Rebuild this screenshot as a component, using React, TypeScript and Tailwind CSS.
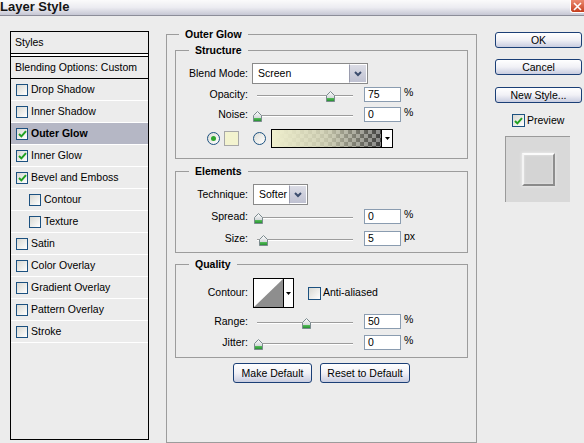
import React from 'react';

interface StyleItem {
  label: string;
  checked?: boolean;
  active?: boolean;
  indent?: boolean;
}

const styleItems: StyleItem[] = [
  { label: 'Drop Shadow' },
  { label: 'Inner Shadow' },
  { label: 'Outer Glow', checked: true, active: true },
  { label: 'Inner Glow', checked: true },
  { label: 'Bevel and Emboss', checked: true },
  { label: 'Contour', indent: true },
  { label: 'Texture', indent: true },
  { label: 'Satin' },
  { label: 'Color Overlay' },
  { label: 'Gradient Overlay' },
  { label: 'Pattern Overlay' },
  { label: 'Stroke' },
];

const CheckBox: React.FC<{ checked?: boolean; size?: string }> = ({ checked, size = 'w-[13px] h-[13px]' }) => (
  <span className={`${size} shrink-0 border border-[#1c5180] bg-linear-to-br from-[#d8d8d2] to-white flex items-center justify-center`}>
    {checked && (
      <svg width="9" height="8" viewBox="0 0 9 8">
        <path d="M1 4 L3.4 6.4 L8 1.2" stroke="#21a121" strokeWidth="2" fill="none" />
      </svg>
    )}
  </span>
);

const Radio: React.FC<{ checked?: boolean }> = ({ checked }) => (
  <span className="w-[13px] h-[13px] shrink-0 rounded-full border border-[#1c5180] bg-linear-to-br from-[#dcdcd6] to-white flex items-center justify-center">
    {checked && <span className="w-[5px] h-[5px] rounded-full bg-[#2ea52e]" />}
  </span>
);

const Chevron = () => (
  <svg width="8" height="6" viewBox="0 0 8 6">
    <path d="M1 1 L4 4 L7 1" stroke="#3c4d6e" strokeWidth="2" fill="none" />
  </svg>
);

const Select: React.FC<{ value: string; width: string }> = ({ value, width }) => (
  <div className={`${width} ml-[4px] h-[21px] flex border border-[#8a8a8a] bg-white`}>
    <span className="flex-1 flex items-center pl-[5px]">{value}</span>
    <span className="w-[18px] bg-linear-to-b from-[#dcdde6] to-[#bfc1d1] border border-white border-l-[#9a9cae] flex items-center justify-center">
      <Chevron />
    </span>
  </div>
);

const Thumb: React.FC<{ pct: number }> = ({ pct }) => (
  <svg
    width="9"
    height="11"
    viewBox="0 0 9 11"
    className="absolute top-[4px]"
    style={{ left: `calc(${pct}% - 4px)` }}
  >
    <defs>
      <linearGradient id="thumbFill" x1="0" y1="0" x2="0" y2="1">
        <stop offset="0" stopColor="#ffffff" />
        <stop offset="0.6" stopColor="#d6dadc" />
        <stop offset="0.62" stopColor="#5cc35f" />
        <stop offset="1" stopColor="#1f8a2b" />
      </linearGradient>
    </defs>
    <path d="M4.5 0.5 L8.5 4.5 L8.5 10.5 L0.5 10.5 L0.5 4.5 Z" fill="url(#thumbFill)" stroke="#7b8a8e" />
  </svg>
);

const SliderRow: React.FC<{ label: string; value: string; unit: string; pct: number; className?: string }> = ({
  label,
  value,
  unit,
  pct,
  className = '',
}) => (
  <div className={`flex items-center h-[15px] ${className}`}>
    <span className="w-[72px] text-right">{label}</span>
    <div className="relative w-[96px] h-[15px] ml-[9px]">
      <div className="absolute left-0 right-0 top-[8px] h-[2px] border-t border-[#9c9c9c] border-b border-b-white" />
      <Thumb pct={pct} />
    </div>
    <div className="w-[37px] h-[15px] ml-[11px] border border-[#8a9cb0] bg-white flex items-center pl-[3px]">{value}</div>
    <span className="ml-[3px] self-start leading-[10px]">{unit}</span>
  </div>
);

const Group: React.FC<{ title: string; className?: string; children: React.ReactNode }> = ({ title, className = '', children }) => (
  <fieldset className={`border border-[#9c9c9c] p-0 m-0 ${className}`}>
    <legend className="ml-[13px] px-[6px] font-bold leading-[12px]">{title}</legend>
    {children}
  </fieldset>
);

const XPButton: React.FC<{ className: string; children: React.ReactNode }> = ({ className, children }) => (
  <button className={`${className} rounded-[3px] border border-[#1b3f76] bg-linear-to-b from-white via-[#f1f1f6] to-[#c9cde0] flex items-center justify-center leading-none`}>
    {children}
  </button>
);

const TitleBar = () => (
  <div className="h-[16px] shrink-0 flex items-start justify-between overflow-hidden border-b border-[#8c8d99] bg-linear-to-b from-[#fbfbfb] via-[#ececf1] to-[#c6c7d4]">
    <span className="text-[13px] font-bold leading-[13px] text-[#151515]">Layer Style</span>
    <span className="w-[14px] h-[13px] rounded-bl-[3px] border-l border-b border-white bg-linear-to-b from-[#ec8a70] to-[#c43d1c] flex items-center justify-center">
      <svg width="9" height="9" viewBox="0 0 9 9">
        <path d="M1 1 L8 8 M8 1 L1 8" stroke="#fff" strokeWidth="1.6" />
      </svg>
    </span>
  </div>
);

const StylesPanel = () => (
  <div className="ml-[10px] mt-[15px] w-[139px] h-[409px] border border-black flex flex-col">
    <div className="h-[22px] shrink-0 flex items-center pl-[4px] border-b border-black">Styles</div>
    <div className="h-[2px] shrink-0 bg-white" />
    <div className="h-[23px] shrink-0 flex items-center pl-[4px] border-t border-b border-black">Blending Options: Custom</div>
    {styleItems.map((item) => (
      <div
        key={item.label}
        className={`h-[22px] shrink-0 flex items-center gap-[3px] border-b border-white ${
          item.indent ? 'pl-[18px]' : 'pl-[5px]'
        } ${item.active ? 'bg-[#b5b7c5] font-bold' : ''}`}
      >
        <CheckBox checked={item.checked} size="w-[12px] h-[12px]" />
        <span>{item.label}</span>
      </div>
    ))}
  </div>
);

const OuterGlowPanel = () => (
  <fieldset className="ml-[17px] mt-[12px] w-[311px] h-[415px] border border-[#9c9c9c] p-0 m-0">
    <legend className="ml-[12px] px-[6px] font-bold leading-[12px]">Outer Glow</legend>
    <div className="px-[8px] pt-[4px] flex flex-col">
      <Group title="Structure">
        <div className="pt-[7px] pb-[10px] flex flex-col">
          <div className="flex items-center h-[21px]">
            <span className="w-[72px] text-right">Blend Mode:</span>
            <Select value="Screen" width="w-[116px]" />
          </div>
          <SliderRow label="Opacity:" value="75" unit="%" pct={76} className="mt-[3px]" />
          <SliderRow label="Noise:" value="0" unit="%" pct={0} className="mt-[5px]" />
          <div className="mt-[7px] h-[19px] flex items-center pl-[31px]">
            <Radio checked />
            <span className="ml-[4px] w-[15px] h-[15px] border border-[#a8a8a8] bg-[#f3f3cf]" />
            <span className="ml-[14px]">
              <Radio />
            </span>
            <div className="ml-[5px] w-[122px] h-[19px] flex border border-black">
              <div className="flex-1 bg-[repeating-conic-gradient(#3f3f3f_0%_25%,#8a8a8a_0%_50%)] bg-[length:8px_8px]">
                <div className="w-full h-full bg-linear-to-r from-[#efefcd] via-[#e4e4c4]/80 to-transparent" />
              </div>
              <div className="w-[11px] bg-white border-l border-black flex items-center justify-center">
                <svg width="5" height="3" viewBox="0 0 5 3">
                  <path d="M0 0 L5 0 L2.5 3 Z" fill="#000" />
                </svg>
              </div>
            </div>
          </div>
        </div>
      </Group>

      <Group title="Elements" className="mt-[6px]">
        <div className="pt-[7px] pb-[6px] flex flex-col">
          <div className="flex items-center h-[21px]">
            <span className="w-[72px] text-right">Technique:</span>
            <span className="ml-[1px]" />
            <Select value="Softer" width="w-[55px]" />
          </div>
          <SliderRow label="Spread:" value="0" unit="%" pct={1} className="mt-[4px]" />
          <SliderRow label="Size:" value="5" unit="px" pct={6} className="mt-[7px]" />
        </div>
      </Group>

      <Group title="Quality" className="mt-[5px]">
        <div className="pt-[8px] pb-[7px] flex flex-col">
          <div className="flex items-center h-[30px]">
            <span className="w-[72px] text-right">Contour:</span>
            <div className="ml-[5px] w-[41px] h-[30px] flex border border-black bg-white">
              <svg width="29" height="28" viewBox="0 0 29 28" className="shrink-0">
                <polygon points="0,28 29,0 29,28" fill="#8e8e8e" />
              </svg>
              <div className="flex-1 border-l border-black flex items-center justify-center">
                <svg width="5" height="3" viewBox="0 0 5 3">
                  <path d="M0 0 L5 0 L2.5 3 Z" fill="#000" />
                </svg>
              </div>
            </div>
            <span className="ml-[14px]">
              <CheckBox />
            </span>
            <span className="ml-[2px]">Anti-aliased</span>
          </div>
          <SliderRow label="Range:" value="50" unit="%" pct={51} className="mt-[6px]" />
          <SliderRow label="Jitter:" value="0" unit="%" pct={1} className="mt-[6px]" />
        </div>
      </Group>

      <div className="mt-[5px] flex justify-center gap-[8px]">
        <XPButton className="w-[79px] h-[20px]">Make Default</XPButton>
        <XPButton className="w-[90px] h-[20px]">Reset to Default</XPButton>
      </div>
    </div>
  </fieldset>
);

const ActionColumn = () => (
  <div className="ml-[18px] mt-[16px] w-[87px] flex flex-col">
    <XPButton className="w-[87px] h-[16px]">OK</XPButton>
    <XPButton className="w-[87px] h-[16px] mt-[11px]">Cancel</XPButton>
    <XPButton className="w-[87px] h-[16px] mt-[12px]">New Style...</XPButton>
    <div className="mt-[10px] ml-[17px] flex items-center gap-[2px]">
      <CheckBox checked />
      <span>Preview</span>
    </div>
    <div className="mt-[7px] ml-[10px] w-[65px] h-[66px] bg-[#d9d9d9] border-l border-t border-[#9a9a9a] flex items-center justify-center">
      <div className="w-[33px] h-[33px] bg-[#d4d4d4] border-2 border-t-[#fbfbfb] border-l-[#f4f4f4] border-r-[#8e8e8e] border-b-[#8a8a8a] shadow-[0_0_3px_#f2f2f2,inset_0_0_2px_#eeeeee]" />
    </div>
  </div>
);

export default function App() {
  return (
    <div className="w-[584px] h-[443px] overflow-hidden bg-[#ececec] font-['Liberation_Sans',Arial,sans-serif] text-[10.5px] text-black flex flex-col">
      <TitleBar />
      <div className="flex items-start flex-1">
        <StylesPanel />
        <OuterGlowPanel />
        <ActionColumn />
      </div>
    </div>
  );
}
